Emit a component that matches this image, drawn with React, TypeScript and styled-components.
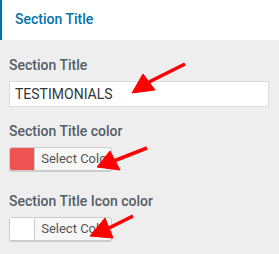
import React from 'react';
import styled, { createGlobalStyle } from 'styled-components';

const GlobalStyle = createGlobalStyle`
  html, body {
    margin: 0;
    padding: 0;
    background: #eeeeee;
  }

  body {
    font-family: Roboto, "Liberation Sans", sans-serif;
  }
`;

const Panel = styled.div`
  position: relative;
  width: 279px;
  height: 254px;
  background: #eeeeee;
  overflow: hidden;
`;

const Header = styled.div`
  height: 40px;
  box-sizing: border-box;
  background: #ffffff;
  border-left: 2px solid #0073aa;
  padding: 10px 0 0 13px;
  font-size: 14px;
  font-weight: 500;
  line-height: 18px;
  color: #0073aa;
`;

const Body = styled.div`
  padding: 16px 10px 0 9px;
`;

const Field = styled.div<{ $gap: number }>`
  display: flex;
  flex-direction: column;
  align-items: flex-start;
  margin-bottom: ${(p) => p.$gap}px;
`;

const Label = styled.div`
  font-size: 14px;
  font-weight: 500;
  line-height: 18px;
  color: #555d66;
  margin-bottom: 7px;
`;

const TextInput = styled.div`
  box-sizing: border-box;
  width: 260px;
  height: 26px;
  background: #ffffff;
  border: 1px solid #dddddd;
  padding: 0 5px;
  font-size: 14px;
  line-height: 24px;
  color: #32373c;
`;

const ColorButton = styled.div`
  display: flex;
  box-sizing: border-box;
  width: 103px;
  height: 24px;
  border: 1px solid #cccccc;
  border-radius: 3px;
  box-shadow: 0 1px 0 #cccccc;
  overflow: hidden;
  background: #f7f7f7;
`;

const Swatch = styled.span<{ $color: string }>`
  width: 30px;
  background: ${(p) => p.$color};
  border-right: 1px solid #cccccc;
`;

const ButtonText = styled.span`
  padding-left: 6px;
  font-size: 13px;
  line-height: 22px;
  color: #555555;
  white-space: nowrap;
`;

const Arrows = styled.svg`
  position: absolute;
  left: 0;
  top: 0;
  pointer-events: none;
`;

function Arrow ({ tail, tip, left, right }: { tail: [number, number]; tip: [number, number]; left: [number, number]; right: [number, number] }) {
  const mx = (left[0] + right[0]) / 2;
  const my = (left[1] + right[1]) / 2;
  return (
    <g fill='#ff0000' stroke='#ff0000'>
      <line strokeWidth={3.5} x1={tail[0]} x2={mx} y1={tail[1]} y2={my} />
      <polygon points={`${tip[0]},${tip[1]} ${left[0]},${left[1]} ${right[0]},${right[1]}`} strokeWidth={1} strokeLinejoin='round' />
    </g>
  );
}

export default function App () {
  return (
    <>
      <GlobalStyle />
      <Panel>
        <Header>Section Title</Header>
        <Body>
          <Field $gap={15}>
            <Label>Section Title</Label>
            <TextInput>TESTIMONIALS</TextInput>
          </Field>
          <Field $gap={21}>
            <Label>Section Title color</Label>
            <ColorButton>
              <Swatch $color='#ee5253' />
              <ButtonText>Select Color</ButtonText>
            </ColorButton>
          </Field>
          <Field $gap={0}>
            <Label>Section Title Icon color</Label>
            <ColorButton>
              <Swatch $color='#ffffff' />
              <ButtonText>Select Color</ButtonText>
            </ColorButton>
          </Field>
        </Body>
        <Arrows width={279} height={254} viewBox='0 0 279 254'>
          <Arrow tail={[185, 64]} tip={[132, 93]} left={[143, 74]} right={[155, 90]} />
          <Arrow tail={[147, 148]} tip={[97, 167]} left={[110, 151]} right={[120, 170]} />
          <Arrow tail={[133, 216]} tip={[90, 236]} left={[105, 218]} right={[113, 238]} />
        </Arrows>
      </Panel>
    </>
  );
}
